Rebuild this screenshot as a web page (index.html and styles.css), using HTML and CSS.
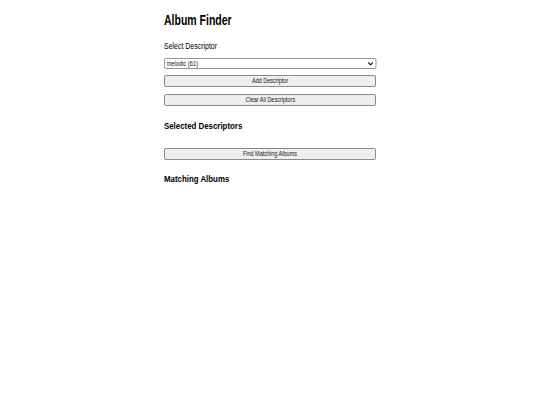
FILE: index.html
```html
<!DOCTYPE html>
<html lang="en">
<head>
<meta charset="utf-8">
<title>Album Finder</title>
<link rel="stylesheet" href="styles.css">
</head>
<body>
<div class="app">
  <h1 class="title"><span class="narrow narrow-title">Album Finder</span></h1>
  <label class="label" for="descriptor"><span class="narrow">Select Descriptor</span></label>
  <div class="select-wrap">
    <select class="select" id="descriptor">
      <option>melodic (61)</option>
    </select>
    <svg class="chevron" width="5" height="4" viewBox="0 0 5 4" aria-hidden="true">
      <polyline points="0.6,0.8 2.5,2.8 4.4,0.8" fill="none" stroke="#111" stroke-width="1.2" stroke-linecap="round" stroke-linejoin="round"/>
    </svg>
  </div>
  <button class="btn btn-add" type="button"><span class="narrow narrow-center">Add Descriptor</span></button>
  <button class="btn btn-clear" type="button"><span class="narrow narrow-center">Clear All Descriptors</span></button>
  <h2 class="section section-selected"><span class="narrow">Selected Descriptors</span></h2>
  <div class="selected-list"></div>
  <button class="btn btn-find" type="button"><span class="narrow narrow-center">Find Matching Albums</span></button>
  <h2 class="section section-matching"><span class="narrow">Matching Albums</span></h2>
  <div class="results"></div>
</div>
</body>
</html>
```

FILE: styles.css
```css
html, body {
  margin: 0;
  padding: 0;
  background: #ffffff;
}

body {
  font-family: "Liberation Sans", Arial, sans-serif;
  color: #000000;
}

.app {
  width: 212px;
  margin: 0 auto;
  padding-top: 12px;
}

.narrow {
  display: inline-block;
  white-space: nowrap;
  transform: scaleX(0.82);
  transform-origin: left center;
}

.narrow-title {
  transform: scaleX(0.75);
}

.narrow-center {
  transform-origin: center center;
}

.title {
  font-size: 14px;
  line-height: 16px;
  font-weight: bold;
  margin: 0 0 13px;
}

.label {
  display: block;
  font-size: 8.5px;
  line-height: 10px;
  margin: 0 0 7px;
}

.select-wrap {
  position: relative;
  width: 212px;
  height: 11px;
  margin: 0 0 6px;
}

.select {
  display: block;
  box-sizing: border-box;
  width: 258.5px;
  height: 11px;
  margin: 0;
  padding: 0 2px;
  font-family: inherit;
  font-size: 7px;
  line-height: 9px;
  color: #111111;
  background: #ffffff;
  border: 1px solid #8a8a8a;
  border-radius: 2px;
  appearance: none;
  -webkit-appearance: none;
  transform: scaleX(0.82);
  transform-origin: left center;
}

.chevron {
  position: absolute;
  right: 3px;
  top: 3.5px;
  pointer-events: none;
}

.btn {
  display: block;
  box-sizing: border-box;
  width: 100%;
  height: 12px;
  margin: 0 0 7px;
  padding: 0;
  font-family: inherit;
  font-size: 6.7px;
  line-height: 10px;
  color: #111111;
  background: #efefef;
  border: 1px solid #8a8a8a;
  border-radius: 2px;
  text-align: center;
}

.btn-clear {
  margin-bottom: 0;
}

.section {
  font-size: 9.6px;
  line-height: 12px;
  font-weight: bold;
  margin: 13.5px 0 0;
}

.selected-list {
  height: 16.5px;
}

.btn-find {
  margin-bottom: 0;
}

.section-matching {
  margin-top: 13.4px;
}
```
